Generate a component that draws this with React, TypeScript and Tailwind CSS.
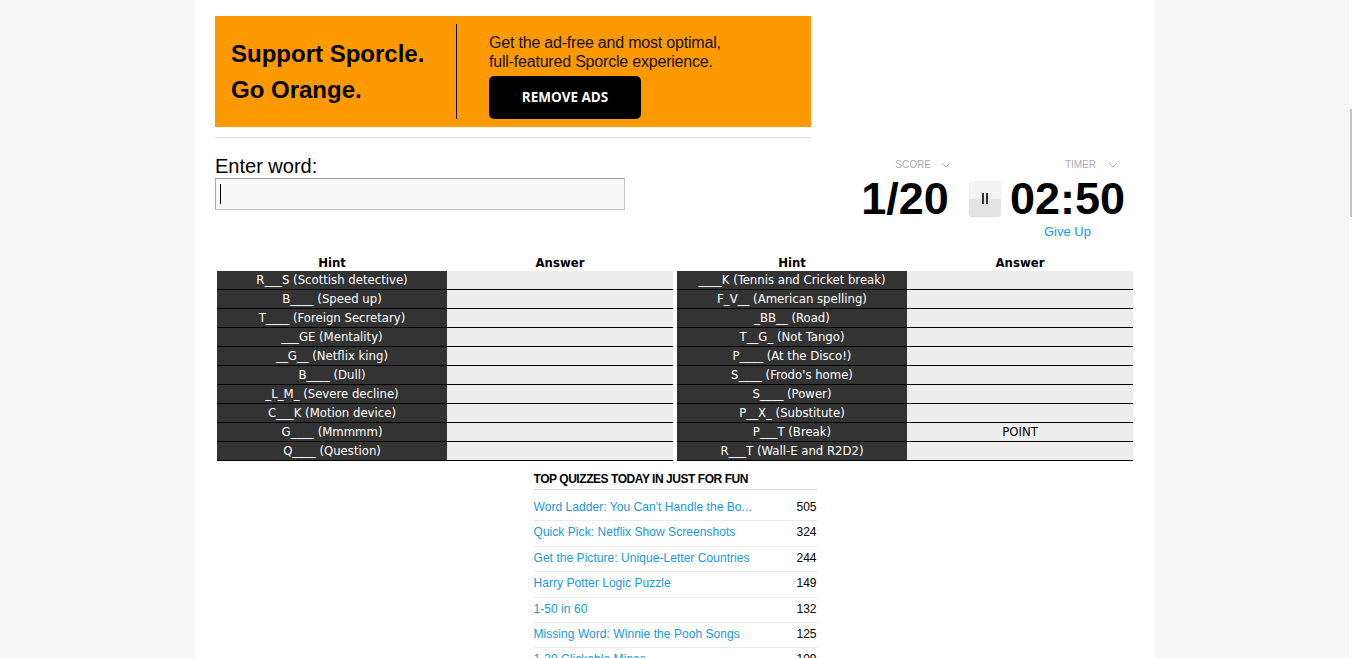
import React from "react";

const left = [
  "R___S (Scottish detective)",
  "B____ (Speed up)",
  "T____ (Foreign Secretary)",
  "___GE (Mentality)",
  "__G__ (Netflix king)",
  "B____ (Dull)",
  "_L_M_ (Severe decline)",
  "C___K (Motion device)",
  "G____ (Mmmmm)",
  "Q____ (Question)",
];
const right: [string, string][] = [
  ["____K (Tennis and Cricket break)", ""],
  ["F_V__ (American spelling)", ""],
  ["_BB__ (Road)", ""],
  ["T__G_ (Not Tango)", ""],
  ["P____ (At the Disco!)", ""],
  ["S____ (Frodo's home)", ""],
  ["S____ (Power)", ""],
  ["P__X_ (Substitute)", ""],
  ["P___T (Break)", "POINT"],
  ["R___T (Wall-E and R2D2)", ""],
];

const quizzes: [string, string][] = [
  ["Word Ladder: You Can't Handle the Bo...", "505"],
  ["Quick Pick: Netflix Show Screenshots", "324"],
  ["Get the Picture: Unique-Letter Countries", "244"],
  ["Harry Potter Logic Puzzle", "149"],
  ["1-50 in 60", "132"],
  ["Missing Word: Winnie the Pooh Songs", "125"],
  ["1-30 Clickable Mines", "109"],
  ["Find the US States", "98"],
];

function Chevron() {
  return (
    <svg width="8" height="5" viewBox="0 0 8 5" className="block">
      <polyline points="0.5,0.5 4,4 7.5,0.5" fill="none" stroke="#a9abb6" strokeWidth="1" />
    </svg>
  );
}

function QuizTable({ rows }: { rows: [string, string][] }) {
  return (
    <div className="w-[456px]">
      <div className="flex h-[16px] text-[13px] font-bold leading-[16px] text-black">
        <div className="w-[230px] text-center">Hint</div>
        <div className="w-[226px] text-center">Answer</div>
      </div>
      {rows.map(([h, a], i) => (
        <div key={i} className="flex h-[19px] border-b border-black text-[13px] leading-[18px]">
          <div className="w-[230px] bg-[#333333] text-center text-white">{h}</div>
          <div className="w-[226px] bg-[#ededed] text-center text-black">{a}</div>
        </div>
      ))}
    </div>
  );
}

export default function App() {
  return (
    <div className="relative h-[658px] w-full overflow-hidden bg-[#f6f6f6] font-['Liberation_Sans',Arial,sans-serif]">
      <div className="ml-[195px] h-full w-[960px] bg-white px-[20px] pt-[16px]">
        {/* Ad */}
        <div className="flex h-[111px] w-[596px] items-center bg-[#fe9a00]">
          <div className="flex w-[241px] flex-col pl-[16px] text-[24px] font-bold leading-[36px] text-black">
            <div>Support Sporcle.</div>
            <div>Go Orange.</div>
          </div>
          <div className="h-[95px] w-px bg-black" />
          <div className="flex flex-col pl-[32px] pt-[8px]">
            <div className="text-[16px] leading-[19px] text-[#111] tracking-[-0.2px]">
              Get the ad-free and most optimal,
              <br />
              full-featured Sporcle experience.
            </div>
            <div className="mt-[5px] flex h-[43px] w-[152px] items-center justify-center rounded-[5px] bg-black font-['Open_Sans',sans-serif] text-[13.5px] font-bold text-white">
              REMOVE ADS
            </div>
          </div>
        </div>
        <div className="mt-[10px] w-[596px] border-t border-[#dddddd]" />

        {/* Game header */}
        <div className="flex h-[117px] items-start">
          <div className="pt-[17px]">
            <div className="text-[20px] leading-[23px] text-black">Enter word:</div>
            <div className="flex h-[32px] w-[410px] items-center border border-t-[#9c9c9c] border-l-[#a8a8a8] border-r-[#c4c4c4] border-b-[#c8c8c8] bg-[#f8f8f8] pl-[4px]">
              <span className="block h-[20px] w-px bg-black" />
            </div>
          </div>
          <div className="ml-auto mr-[10px] flex items-start pt-[21px]">
            <div className="flex flex-col items-end">
              <div className="flex h-[12px] items-center gap-[11px] text-[10px] leading-[12px] text-[#a9abb6]">
                <span>SCORE</span>
                <Chevron />
              </div>
              <div className="mt-[6px] pr-[1px] text-[45px] font-bold leading-[44px] text-black">1/20</div>
            </div>
            <div className="ml-[19px] mt-[22px] flex h-[35px] w-[32px] items-center justify-center gap-[2px] rounded-[3px] bg-linear-to-b from-[#f3f3f3] from-50% to-[#e3e3e3] to-50% shadow-[0_1px_1px_rgba(0,0,0,0.15)]">
              <span className="block h-[11px] w-[2px] bg-[#333]" />
              <span className="block h-[11px] w-[2px] bg-[#333]" />
            </div>
            <div className="ml-[9px] flex flex-col items-center">
              <div className="flex h-[12px] w-full items-center justify-end gap-[13px] pr-[8px] text-[10px] leading-[12px] text-[#a9abb6]">
                <span>TIMER</span>
                <Chevron />
              </div>
              <div className="mt-[6px] text-[45px] font-bold leading-[44px] text-black">02:50</div>
              <div className="mt-[3px] text-[13px] leading-[16px] text-[#1b98d8]">Give Up</div>
            </div>
          </div>
        </div>

        {/* Tables */}
        <div className="ml-[2px] flex gap-[4px] font-['DejaVu_Sans_Condensed','DejaVu_Sans',sans-serif] [font-stretch:condensed]">
          <QuizTable rows={left.map((h) => [h, ""] as [string, string])} />
          <QuizTable rows={right} />
        </div>

        {/* Top quizzes */}
        <div className="mx-auto mt-[11px] w-[283px]">
          <div className="border-b border-[#d6d6d6] pb-[2px] text-[12px] font-bold leading-[15px] tracking-[-0.45px] text-black">
            TOP QUIZZES TODAY IN JUST FOR FUN
          </div>
          <div className="mt-[6px]">
            {quizzes.map(([t, n], i) => (
              <div key={i} className="flex justify-between border-b border-[#eaeaea] pt-[4px] pb-[5px] text-[12px] leading-[15.4px]">
                <span className="text-[#1b98d8] tracking-[0.05px]">{t}</span>
                <span className="text-black">{n}</span>
              </div>
            ))}
          </div>
        </div>
      </div>
      {/* overlay scrollbar */}
      <div className="absolute right-0 top-0 h-full w-[3px] bg-[#fbfbfb]">
        <div className="ml-[1px] mt-[109px] h-[108px] w-[2px] bg-[#c2c2c2]" />
      </div>
    </div>
  );
}
